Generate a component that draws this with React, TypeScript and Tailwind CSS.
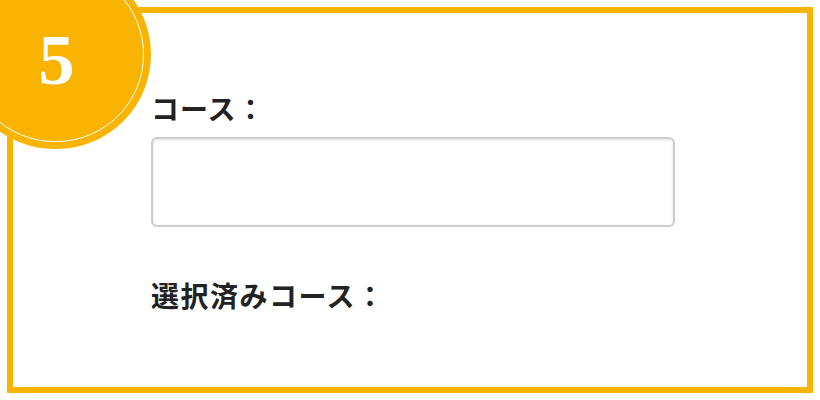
import React from 'react';

export default function App() {
  return (
    <div className="relative w-[820px] h-[400px] overflow-hidden bg-white">
      <div className="absolute left-[7px] top-[7px] w-[806px] h-[386px] border-[6px] border-[#f8b400] bg-white">
        <div className="pl-[138px] pt-[81px] font-['Noto_Sans_CJK_JP','Noto_Sans',sans-serif] text-[#222]">
          <label className="block text-[28px] font-bold leading-none tracking-[1px]">コース：</label>
          <input
            type="text"
            className="mt-[15px] block w-[524px] h-[90px] rounded-[6px] border-2 border-[#cccccc] bg-white shadow-[inset_0_1px_3px_rgba(0,0,0,0.12)] outline-none"
          />
          <div className="mt-[54px] text-[28px] font-bold leading-none tracking-[1.5px]">選択済みコース：</div>
        </div>
      </div>
      <div className="absolute left-[-40px] top-[-40px] w-[191px] h-[189px] rounded-full bg-[#f8b400] p-[7px]">
        <div className="w-full h-full rounded-full border-[1.5px] border-white flex items-center justify-center">
          <span className="mt-[10px] ml-[2px] font-[family-name:'Liberation_Serif',serif] font-bold text-[72px] leading-none text-white">5</span>
        </div>
      </div>
    </div>
  );
}
